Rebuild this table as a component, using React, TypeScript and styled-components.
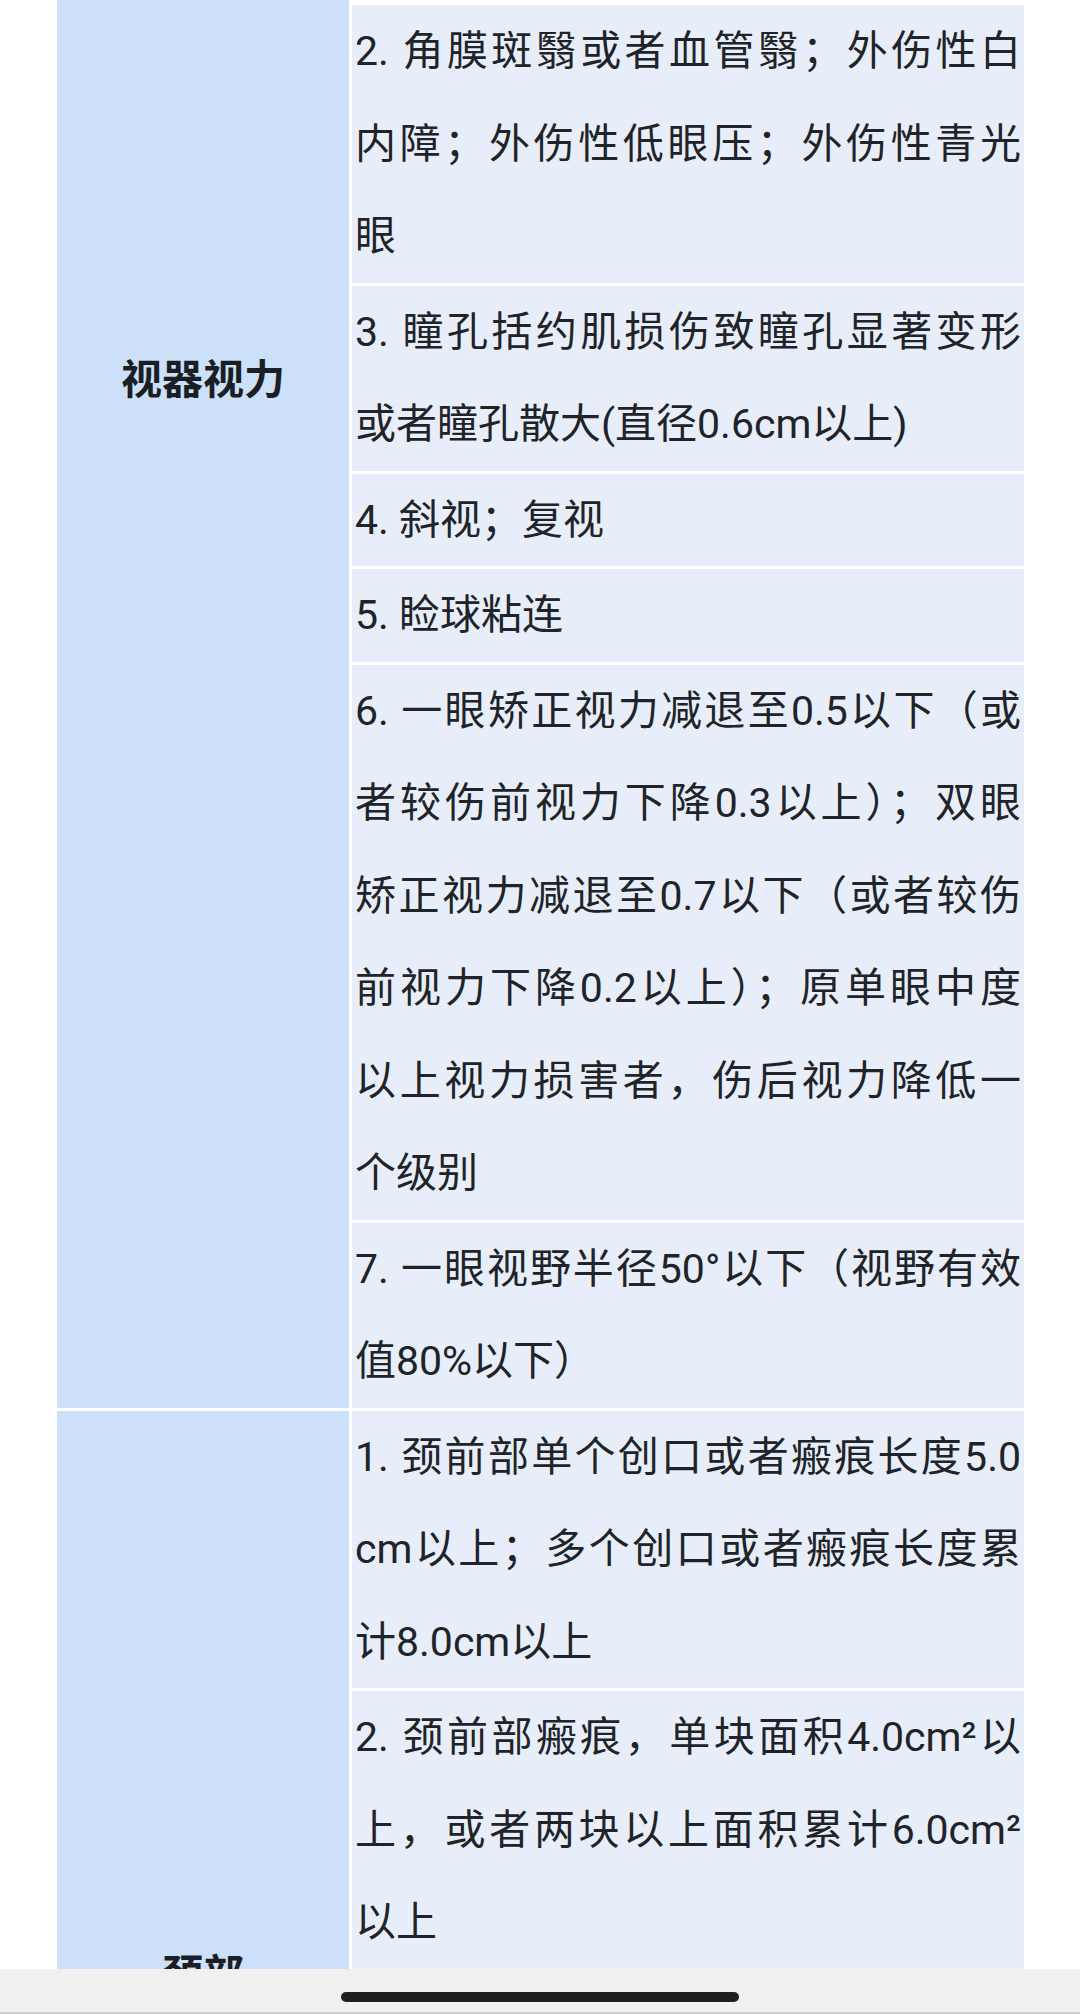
import React from 'react';
import styled, { createGlobalStyle } from 'styled-components';

const GlobalStyle = createGlobalStyle`
  body {
    margin: 0;
    background: #fff;
    font-family: Roboto, "Noto Sans CJK SC", sans-serif;
    color: #202328;
  }
`;

const Page = styled.div`
  padding: 0 56px 0 57px;
  background: #fff;
`;

const Table = styled.div`
  display: flex;
  flex-direction: column;
  gap: 3px;
  background: #fff;
`;

const Section = styled.div`
  display: grid;
  grid-template-columns: 292px 1fr;
  column-gap: 3px;
`;

// the merged label cell runs past the visible area, so its label sits at a fixed offset
const LabelCell = styled.div<{ $top?: number }>`
  background: #cde0fa;
  display: flex;
  justify-content: center;
  align-items: ${(props) => (props.$top !== undefined ? 'flex-start' : 'center')};
  padding-top: ${(props) => (props.$top !== undefined ? `${props.$top}px` : '0')};
`;

const Label = styled.div`
  font-size: 41px;
  line-height: 92px;
  font-weight: 700;
  color: #1b1f25;
`;

const Items = styled.div<{ $cut?: boolean }>`
  display: flex;
  flex-direction: column;
  gap: 3px;
  padding-top: ${(props) => (props.$cut ? '5px' : '0')};
  background: #fff;
`;

const Item = styled.div`
  background: #e8eef9;
  padding: 0 3px;
  font-size: 41px;
  line-height: 92.5px;
  color: #202328;
`;

const Line = styled.span<{ $full: boolean }>`
  display: block;
  white-space: nowrap;
  text-align: ${(props) => (props.$full ? 'justify' : 'left')};
  text-align-last: ${(props) => (props.$full ? 'justify' : 'left')};
`;

const NavBar = styled.div`
  position: fixed;
  left: 0;
  right: 0;
  bottom: 0;
  height: 43px;
  background: #f0f0f0;
  border-bottom: 2px solid #cfcfcf;
  display: flex;
  justify-content: center;
  align-items: flex-start;
`;

const HomePill = styled.div`
  margin-top: 23px;
  width: 398px;
  height: 10px;
  border-radius: 5px;
  background: #1f1f1f;
`;

type SectionData = {
  label: string;
  labelTop: number;
  cut?: boolean;
  items: string[][];
};

const sections: SectionData[] = [
  {
    label: '视器视力',
    labelTop: 334,
    cut: true,
    items: [
      ['2. 角膜斑翳或者血管翳；外伤性白', '内障；外伤性低眼压；外伤性青光', '眼'],
      ['3. 瞳孔括约肌损伤致瞳孔显著变形', '或者瞳孔散大(直径0.6cm以上)'],
      ['4. 斜视；复视'],
      ['5. 睑球粘连'],
      [
        '6. 一眼矫正视力减退至0.5以下（或',
        '者较伤前视力下降0.3以上）；双眼',
        '矫正视力减退至0.7以下（或者较伤',
        '前视力下降0.2以上）；原单眼中度',
        '以上视力损害者，伤后视力降低一',
        '个级别',
      ],
      ['7. 一眼视野半径50°以下（视野有效', '值80%以下）'],
    ],
  },
  {
    label: '颈部',
    labelTop: 518,
    items: [
      ['1. 颈前部单个创口或者瘢痕长度5.0', 'cm以上；多个创口或者瘢痕长度累', '计8.0cm以上'],
      ['2. 颈前部瘢痕，单块面积4.0cm²以', '上，或者两块以上面积累计6.0cm²', '以上'],
    ],
  },
];

const App = () => {
  return (
    <>
      <GlobalStyle />
      <Page>
        <Table>
          {sections.map((section) => (
            <Section key={section.label}>
              <LabelCell $top={section.labelTop}>
                <Label>{section.label}</Label>
              </LabelCell>
              <Items $cut={section.cut}>
                {section.items.map((lines, i) => (
                  <Item key={i}>
                    {lines.map((line, j) => (
                      <Line key={j} $full={j < lines.length - 1}>
                        {line}
                      </Line>
                    ))}
                  </Item>
                ))}
              </Items>
            </Section>
          ))}
        </Table>
      </Page>
      <NavBar>
        <HomePill />
      </NavBar>
    </>
  );
};

export default App;
